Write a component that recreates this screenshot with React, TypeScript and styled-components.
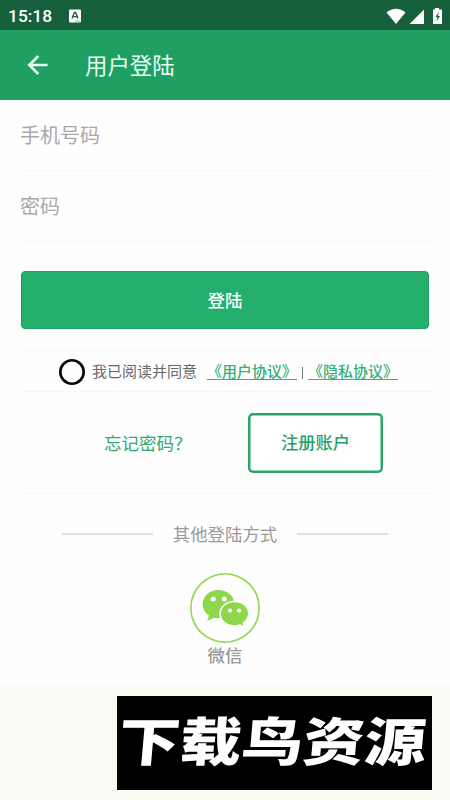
import React from "react";
import styled, { createGlobalStyle } from "styled-components";

const Global = createGlobalStyle`
  * { box-sizing: border-box; }
  body { margin: 0; background: #f9faf4; }
  button, input { font-family: inherit; }
`;

const Screen = styled.div`
  width: 450px;
  height: 800px;
  overflow: hidden;
  display: flex;
  flex-direction: column;
  background: #f9faf4;
  font-family: Roboto, "Noto Sans CJK SC", sans-serif;
`;

const StatusBar = styled.header`
  height: 30px;
  flex: none;
  display: flex;
  align-items: center;
  padding: 1px 6px 0 8px;
  background: #155f3b;
  color: #fff;
`;

const Clock = styled.span`
  width: 61px;
  font-size: 17.4px;
  font-weight: 500;
  line-height: 30px;
`;

const StatusIcons = styled.div`
  display: flex;
  align-items: center;
  margin-left: auto;
`;

const TitleBar = styled.div`
  height: 70px;
  flex: none;
  display: flex;
  align-items: center;
  padding-left: 26px;
  background: #1f9f62;
  color: #eafff4;
`;

const Title = styled.h1`
  margin: 2px 0 0 35px;
  font-size: 22.4px;
  font-weight: 400;
  line-height: 68px;
`;

const BackButton = styled.button`
  display: flex;
  padding: 0;
  border: 0;
  background: none;
`;

const Content = styled.main`
  height: 587px;
  flex: none;
  padding: 0 17px 0 20px;
  background: #fefefe;
`;

const Field = styled.input`
  display: block;
  width: 100%;
  height: 71px;
  padding: 2px 0 0;
  border: 0;
  border-bottom: 1px solid #f8f7f2;
  background: transparent;
  font-size: 20px;
  outline: none;
  &::placeholder { color: #a9a9a9; opacity: 1; }
`;

const LoginButton = styled.button`
  display: block;
  width: 408px;
  height: 58px;
  margin: 29px 0 21px 1px;
  padding: 0 0 2px;
  border: 1px solid #1fa163;
  border-radius: 4px;
  background: #23ae6c;
  color: #fff;
  font-size: 17.4px;
  font-weight: 500;
`;

const Agreement = styled.div`
  height: 42px;
  display: flex;
  align-items: center;
  padding: 1px 0 0 39px;
  border: solid #f8f7f2;
  border-width: 1px 0;
  color: #686868;
  font-size: 15px;
  line-height: 22px;
  white-space: nowrap;
`;

const Radio = styled.span`
  width: 26px;
  height: 26px;
  margin-right: 7px;
  box-shadow: inset 0 0 0 2.6px #080808;
  border-radius: 50%;
`;

const Link = styled.a`
  color: #35b078;
  font-weight: 500;
  text-decoration: underline;
  text-decoration-thickness: 1px;
  text-underline-offset: 1.5px;
`;

const ConsentText = styled.span`
  width: 115px;
`;

const Separator = styled.span`
  width: 1px;
  height: 12px;
  margin: 2px 5px 0;
  background: #777;
`;

const AccountRow = styled.div`
  height: 102px;
  display: flex;
  align-items: flex-start;
  padding: 20.5px 0 0 84px;
  border-bottom: 1px solid #f8f7f2;
`;

const ForgotLink = styled.a`
  width: 144px;
  color: #30a873;
  font-size: 17.5px;
  line-height: 62px;
`;

const RegisterButton = styled.button`
  width: 135px;
  height: 60px;
  padding: 0 0 2px;
  border: 0;
  box-shadow: inset 0 0 0 2.5px #2ca36b;
  border-radius: 5px;
  background: #fff;
  color: #27a067;
  font-size: 17.3px;
  font-weight: 500;
`;

const OtherMethods = styled.div`
  display: flex;
  align-items: center;
  gap: 20px;
  width: 326px;
  height: 26px;
  margin: 28px 0 0 42px;
  color: #999;
  font-size: 17.4px;
  line-height: 26px;
  white-space: nowrap;
`;

const Rule = styled.span`
  flex: 1;
  height: 2px;
  margin-top: -3px;
  background: #dfdfdf;
`;

const WechatLogin = styled.div`
  width: 70px;
  display: flex;
  flex-direction: column;
  align-items: center;
  margin: 25px 0 0 170px;
  color: #999;
  font-size: 17.4px;
  font-weight: 500;
  line-height: 26px;
`;

const WechatCircle = styled.div`
  width: 70px;
  height: 70px;
  box-shadow: inset 0 0 0 1.6px #91d64e;
  border-radius: 50%;
  display: flex;
  align-items: center;
  justify-content: center;
`;

const Banner = styled.div`
  width: 315px;
  height: 94px;
  flex: none;
  margin: 9px 0 0 117px;
  display: flex;
  align-items: flex-start;
  justify-content: center;
  overflow: hidden;
  background: #000;
`;

const BannerText = styled.span`
  margin: -4px 3px 0 0;
  color: #fff;
  font-family: "Noto Sans CJK SC", sans-serif;
  font-size: 61.5px;
  font-weight: 900;
  line-height: 94px;
  white-space: nowrap;
  transform: skewX(-5deg) scaleY(0.85);
`;

export default function App() {
  return (
    <>
      <Global />
      <Screen>
        <StatusBar>
          <Clock>15:18</Clock>
          <svg width="12" height="14" viewBox="0 0 12 14">
            <rect y="0.5" width="12" height="13" rx="1" fill="#fff" />
            <path d="M3 9.500 5.400 3.500h1.200L9 9.500M4.200 7.600h3.600" fill="none" stroke="#155f3b" strokeWidth="1.4" />
            <path d="M6 12h5" stroke="#8fb5a2" />
          </svg>
          <StatusIcons>
            <svg width="59" height="20" viewBox="0 0 59 20">
              <path d="M1.500 6.500Q11 -1 20.500 6.500L11 18Z" fill="#fff" />
              <path d="M39 3.500V18H24.500Z" fill="#fff" />
              <path d="M50 2h4v1.500h3V18H48V3.500h2Z" fill="#fff" />
              <path d="M54 6 50.500 11h2L51.500 15.500 55 10h-2Z" fill="#155f3b" />
            </svg>
          </StatusIcons>
        </StatusBar>
        <TitleBar>
          <BackButton aria-label="返回">
            <svg width="24" height="24" viewBox="0 0 24 24" fill="none" stroke="#eafff4" strokeWidth="2.600">
              <path d="M21.500 12H4M12.300 3 3.300 12l9 9" />
            </svg>
          </BackButton>
          <Title>用户登陆</Title>
        </TitleBar>
        <Content>
          <Field type="tel" placeholder="手机号码" />
          <Field type="password" placeholder="密码" />
          <LoginButton>登陆</LoginButton>
          <Agreement>
            <Radio />
            <ConsentText>我已阅读并同意</ConsentText>
            <Link>《用户协议》</Link>
            <Separator />
            <Link>《隐私协议》</Link>
          </Agreement>
          <AccountRow>
            <ForgotLink>忘记密码？</ForgotLink>
            <RegisterButton>注册账户</RegisterButton>
          </AccountRow>
          <OtherMethods>
            <Rule />
            其他登陆方式
            <Rule />
          </OtherMethods>
          <WechatLogin>
            <WechatCircle>
              <svg width="48" height="42" viewBox="0 0 48 42">
                <g fill="#8ed74b">
                  <path d="M17 3C8 3 1.700 9.500 1.700 17c0 5 2.400 8.700 6.300 11.500L6.300 34l6.500-3.200c10.800 2 20.500-4.400 20.500-14C33.300 9 26 3 17 3Z" />
                  <path d="M33.500 14.500c-8.200 0-14.400 5.300-14.400 12.200S25.300 39 33.500 39q2.700 0 5.300-1L43.500 41l-1.100-5.200c3.300-2.100 5.400-5.400 5.400-9.100 0-6.900-6.100-12.200-14.300-12.200Z" stroke="#fefefe" strokeWidth="1.600" />
                </g>
                <g fill="#fff">
                  <circle cx="12.200" cy="12" r="2.500" />
                  <circle cx="23.300" cy="12" r="2.500" />
                  <circle cx="29" cy="23.600" r="2.100" />
                  <circle cx="38" cy="23.600" r="2.100" />
                </g>
              </svg>
            </WechatCircle>
            微信
          </WechatLogin>
        </Content>
        <Banner>
          <BannerText>下载鸟资源</BannerText>
        </Banner>
      </Screen>
    </>
  );
}
